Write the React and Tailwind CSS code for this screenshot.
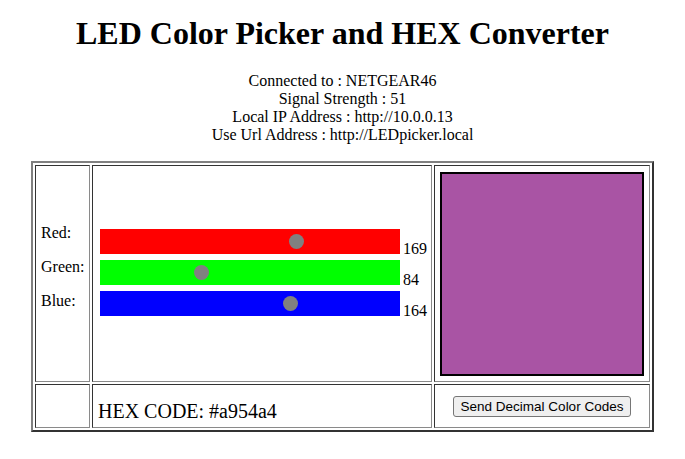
import React from "react";

const channels = [
  { label: "Red", value: 169, color: "bg-[#ff0000]" },
  { label: "Green", value: 84, color: "bg-[#00ff00]" },
  { label: "Blue", value: 164, color: "bg-[#0000ff]" },
];

// a slider drawn as a 300px bar with a 15px gray thumb
const Slider = ({ value, color }) => (
  <div className={`relative w-[300px] h-[25px] ${color}`}>
    <div
      className="absolute top-[5px] w-[15px] h-[15px] rounded-full bg-[#808080]"
      style={{ left: Math.round((value / 255) * 285) }}
    />
  </div>
);

const cell =
  "border border-t-[#333] border-l-[#333] border-r-[#8a8a8a] border-b-[#8a8a8a] bg-white";

const App = () => {
  return (
    <div className="min-h-screen bg-white text-black font-['Liberation_Serif',serif]">
      <h1 className="pt-[15px] text-center text-[32px] leading-[37px] font-bold">
        LED Color Picker and HEX Converter
      </h1>

      <div className="mt-[20px] text-center text-base leading-[18px]">
        <div>Connected to : NETGEAR46</div>
        <div>Signal Strength : 51</div>
        <div>Local IP Address : http://10.0.0.13</div>
        <div>Use Url Address : http://LEDpicker.local</div>
      </div>

      <div className="mx-auto mt-[17px] w-[623px] grid grid-cols-[55px_340px_216px] grid-rows-[217px_44px] gap-[2px] p-[2px] border-2 border-t-[#808080] border-l-[#808080] border-r-[#333] border-b-[#333]">
        <div className={`${cell} flex flex-col justify-center pl-[5px] pb-[14px]`}>
          <div className="flex flex-col gap-[16px] leading-[18px]">
            {channels.map((c) => (
              <div key={c.label}>{c.label}:</div>
            ))}
          </div>
        </div>

        <div className={`${cell} flex flex-col justify-center pl-[7px] pb-[3px]`}>
          <div className="flex flex-col gap-[6px]">
            {channels.map((c) => (
              <div key={c.label} className="flex items-end">
                <Slider value={c.value} color={c.color} />
                <span className="ml-[3px] mb-[-4px] leading-[18px]">{c.value}</span>
              </div>
            ))}
          </div>
        </div>

        <div className={`${cell} flex items-center justify-center`}>
          <div className="w-[204px] h-[204px] border-2 border-black bg-[#a954a4]" />
        </div>

        <div className={cell} />

        <div className={`${cell} flex items-end pl-[5px] pb-[4px]`}>
          <span className="text-[20px] leading-[23px]">HEX CODE: #a954a4</span>
        </div>

        <div className={`${cell} flex items-center justify-center pt-[1px]`}>
          <button className="h-[21px] px-[7px] rounded-[3px] border border-[#767676] bg-[#efefef] text-[13.5px] leading-none font-['Liberation_Sans',Arial,sans-serif]">
            Send Decimal Color Codes
          </button>
        </div>
      </div>
    </div>
  );
};

export default App;
